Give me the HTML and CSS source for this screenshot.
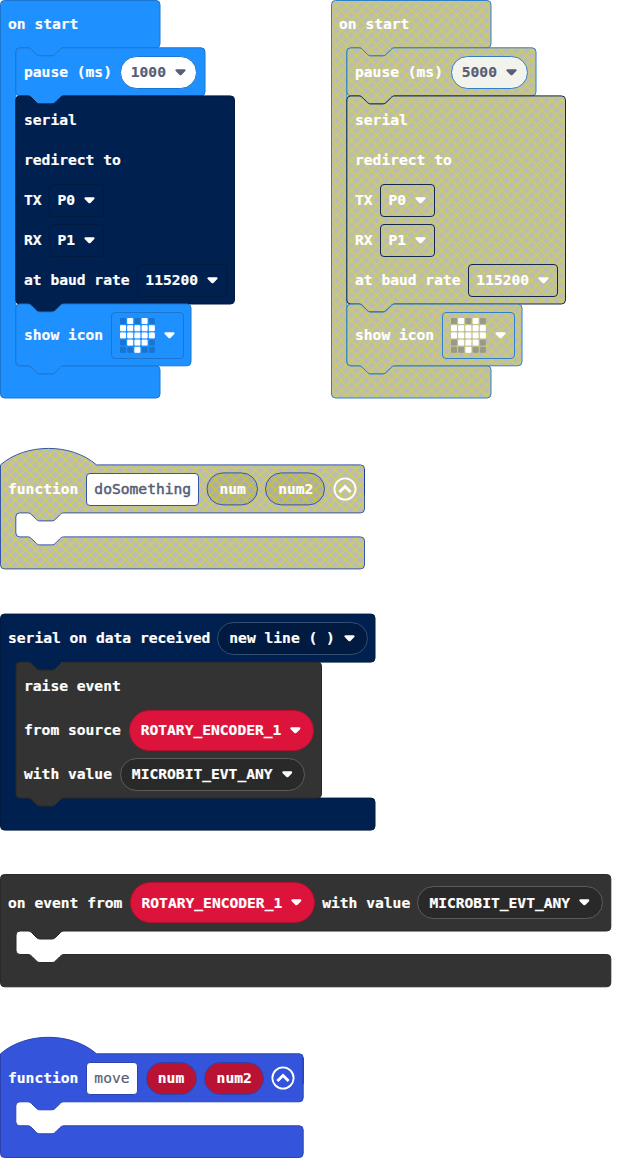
FILE: index.html
```html
<!DOCTYPE html>
<html lang="en">
<head>
<meta charset="utf-8">
<title>Blocks</title>
<link rel="stylesheet" href="styles.css">
</head>
<body>
<svg class="defs" width="0" height="0" aria-hidden="true">
  <defs>
    <pattern id="hatch" width="10" height="10" patternUnits="userSpaceOnUse">
      <rect width="10" height="10" fill="#aaa"/>
      <path d="M-1 -1L11 11M11 -1L-1 11" stroke="#cc0" stroke-width="1.15"/>
    </pattern>
    <symbol id="caret" viewBox="0 0 11 7"><path d="M1.5 .3H9.5C10.6 .3 11 1.4 10.3 2.1L6.7 5.8Q5.5 6.9 4.3 5.8L.7 2.1C0 1.4 .4 .3 1.5 .3Z"/></symbol>
    <symbol id="collapse" viewBox="0 0 24 24"><circle cx="12" cy="12" r="10.6" fill="none" stroke="#fff" stroke-width="1.8"/><path d="M6.4 15L12 9.4L17.6 15" fill="none" stroke="#fff" stroke-width="2.8"/></symbol>
    <symbol id="heart" viewBox="0 0 35 35">
      <path class="led led-off" d="M.5 .5h5v5h-5zM14.9 .5h5v5h-5zM29.3 .5h5v5h-5zM.5 22.1h5v5h-5zM29.3 22.1h5v5h-5zM.5 29.3h5v5h-5zM7.7 29.3h5v5h-5zM22.1 29.3h5v5h-5zM29.3 29.3h5v5h-5z"/>
      <path class="led led-on" d="M7.7 .5h5v5h-5zM22.1 .5h5v5h-5zM.5 7.7h5v5h-5zM7.7 7.7h5v5h-5zM14.9 7.7h5v5h-5zM22.1 7.7h5v5h-5zM29.3 7.7h5v5h-5zM.5 14.9h5v5h-5zM7.7 14.9h5v5h-5zM14.9 14.9h5v5h-5zM22.1 14.9h5v5h-5zM29.3 14.9h5v5h-5zM7.7 22.1h5v5h-5zM14.9 22.1h5v5h-5zM22.1 22.1h5v5h-5zM14.9 29.3h5v5h-5z"/>
    </symbol>
    <g id="start-shapes" transform="translate(.5 .5)">
      <path class="basic" d="M0 4a4 4 0 0 1 4-4H155.5a4 4 0 0 1 4 4V43.3a4 4 0 0 1-4 4H63.3c-2 0-3 1-4 2l-4 4c-1 1-2 2-4 2h-12c-2 0-3-1-4-2l-4-4c-1-1-2-2-4-2h-8a4 4 0 0 0-4 4V361.3a4 4 0 0 0 4 4h8c2 0 3 1 4 2l4 4c1 1 2 2 4 2h12c2 0 3-1 4-2l4-4c1-1 2-2 4-2H155.5a4 4 0 0 1 4 4V393.5a4 4 0 0 1-4 4H4a4 4 0 0 1-4-4Z"/>
      <path class="basic" d="M15.3 51.3a4 4 0 0 1 4-4h8c2 0 3 1 4 2l4 4c1 1 2 2 4 2h12c2 0 3-1 4-2l4-4c1-1 2-2 4-2H200.5a4 4 0 0 1 4 4V91.4a4 4 0 0 1-4 4H63.3c-2 0-3 1-4 2l-4 4c-1 1-2 2-4 2h-12c-2 0-3-1-4-2l-4-4c-1-1-2-2-4-2h-8a4 4 0 0 1-4-4Z"/>
      <path class="serial" d="M15.3 99.4a4 4 0 0 1 4-4h8c2 0 3 1 4 2l4 4c1 1 2 2 4 2h12c2 0 3-1 4-2l4-4c1-1 2-2 4-2H230a4 4 0 0 1 4 4V299.5a4 4 0 0 1-4 4H63.3c-2 0-3 1-4 2l-4 4c-1 1-2 2-4 2h-12c-2 0-3-1-4-2l-4-4c-1-1-2-2-4-2h-8a4 4 0 0 1-4-4Z"/>
      <path class="basic" d="M15.3 307.5a4 4 0 0 1 4-4h8c2 0 3 1 4 2l4 4c1 1 2 2 4 2h12c2 0 3-1 4-2l4-4c1-1 2-2 4-2H186.5a4 4 0 0 1 4 4V361.3a4 4 0 0 1-4 4H63.3c-2 0-3 1-4 2l-4 4c-1 1-2 2-4 2h-12c-2 0-3-1-4-2l-4-4c-1-1-2-2-4-2h-8a4 4 0 0 1-4-4Z"/>
    </g>
  </defs>
</svg>

<main class="workspace">
  <div class="pair">
    <section class="script start">
      <svg class="shapes" width="236" height="399"><use href="#start-shapes"/></svg>
      <div class="content">
        <div class="row">on start</div>
        <div class="row inner">pause (ms)<span class="field number">1000<svg class="caret"><use href="#caret"/></svg></span></div>
        <div class="lines">
          <div class="row inner">serial</div>
          <div class="row inner">redirect to</div>
          <div class="row inner">TX<span class="field menu">P0<svg class="caret"><use href="#caret"/></svg></span></div>
          <div class="row inner">RX<span class="field menu">P1<svg class="caret"><use href="#caret"/></svg></span></div>
          <div class="row inner">at baud rate<span class="field menu">115200<svg class="caret"><use href="#caret"/></svg></span></div>
        </div>
        <div class="row inner tall">show icon<span class="field icon"><svg class="heart"><use href="#heart"/></svg><svg class="caret"><use href="#caret"/></svg></span></div>
      </div>
    </section>

    <section class="script start disabled">
      <svg class="shapes" width="236" height="399"><use href="#start-shapes"/></svg>
      <div class="content">
        <div class="row">on start</div>
        <div class="row inner">pause (ms)<span class="field number">5000<svg class="caret"><use href="#caret"/></svg></span></div>
        <div class="lines">
          <div class="row inner">serial</div>
          <div class="row inner">redirect to</div>
          <div class="row inner">TX<span class="field menu">P0<svg class="caret"><use href="#caret"/></svg></span></div>
          <div class="row inner">RX<span class="field menu">P1<svg class="caret"><use href="#caret"/></svg></span></div>
          <div class="row inner">at baud rate<span class="field menu">115200<svg class="caret"><use href="#caret"/></svg></span></div>
        </div>
        <div class="row inner tall">show icon<span class="field icon"><svg class="heart"><use href="#heart"/></svg><svg class="caret"><use href="#caret"/></svg></span></div>
      </div>
    </section>
  </div>

  <section class="script function disabled do-something">
    <svg class="shapes" width="366" height="122">
      <g transform="translate(.5 16.9)">
        <path class="func" d="M0 0c25-22 71-22 96 0H360a4 4 0 0 1 4 4V44a4 4 0 0 1-4 4H63.3c-2 0-3 1-4 2l-4 4c-1 1-2 2-4 2h-12c-2 0-3-1-4-2l-4-4c-1-1-2-2-4-2h-8a4 4 0 0 0-4 4V68a4 4 0 0 0 4 4h8c2 0 3 1 4 2l4 4c1 1 2 2 4 2h12c2 0 3-1 4-2l4-4c1-1 2-2 4-2H360a4 4 0 0 1 4 4V100a4 4 0 0 1-4 4H4a4 4 0 0 1-4-4Z"/>
        <path class="edge" d="M364 4V30"/>
        <rect class="func" x="206.5" y="8" width="50.5" height="32" rx="16"/>
        <rect class="func" x="265" y="8" width="59" height="32" rx="16"/>
      </g>
    </svg>
    <div class="content">
      <div class="row">function<span class="field name">doSomething</span><span class="field param">num</span><span class="field param">num2</span><svg class="toggle"><use href="#collapse"/></svg></div>
    </div>
  </section>

  <section class="script received">
    <svg class="shapes" width="376" height="218">
      <g transform="translate(.5 .1)">
        <path class="serial" d="M0 4a4 4 0 0 1 4-4H370.5a4 4 0 0 1 4 4V44a4 4 0 0 1-4 4H60V184H370.5a4 4 0 0 1 4 4V212a4 4 0 0 1-4 4H4a4 4 0 0 1-4-4Z"/>
        <path class="control" d="M15.5 52a4 4 0 0 1 4-4h8c2 0 3 1 4 2l4 4c1 1 2 2 4 2h12c2 0 3-1 4-2l4-4c1-1 2-2 4-2H317a4 4 0 0 1 4 4V180a4 4 0 0 1-4 4H63.5c-2 0-3 1-4 2l-4 4c-1 1-2 2-4 2h-12c-2 0-3-1-4-2l-4-4c-1-1-2-2-4-2h-8a4 4 0 0 1-4-4Z"/>
      </g>
    </svg>
    <div class="content">
      <div class="row">serial on data received<span class="field round newline">new line ( )<svg class="caret"><use href="#caret"/></svg></span></div>
      <div class="row inner">raise event</div>
      <div class="row inner source">from source<span class="field round enum">ROTARY_ENCODER_1<svg class="caret"><use href="#caret"/></svg></span></div>
      <div class="row inner">with value<span class="field round value">MICROBIT_EVT_ANY<svg class="caret"><use href="#caret"/></svg></span></div>
    </div>
  </section>

  <section class="script event">
    <svg class="shapes" width="612" height="114">
      <g transform="translate(.5 .5)">
        <path class="control" d="M0 4a4 4 0 0 1 4-4H606.3a4 4 0 0 1 4 4V52.5a4 4 0 0 1-4 4H63.5c-2 0-3 1-4 2l-4 4c-1 1-2 2-4 2h-12c-2 0-3-1-4-2l-4-4c-1-1-2-2-4-2h-8a4 4 0 0 0-4 4V76a4 4 0 0 0 4 4h8c2 0 3 1 4 2l4 4c1 1 2 2 4 2h12c2 0 3-1 4-2l4-4c1-1 2-2 4-2H606.3a4 4 0 0 1 4 4V108.3a4 4 0 0 1-4 4H4a4 4 0 0 1-4-4Z"/>
      </g>
    </svg>
    <div class="content">
      <div class="row event-row">on event from<span class="field round enum">ROTARY_ENCODER_1<svg class="caret"><use href="#caret"/></svg></span><span class="label">with value</span><span class="field round value">MICROBIT_EVT_ANY<svg class="caret"><use href="#caret"/></svg></span></div>
    </div>
  </section>

  <section class="script function move">
    <svg class="shapes" width="305" height="121">
      <g transform="translate(.5 16.8)">
        <path class="func" d="M0 0c25-22 71-22 96 0H298.7a4 4 0 0 1 4 4V44a4 4 0 0 1-4 4H63.3c-2 0-3 1-4 2l-4 4c-1 1-2 2-4 2h-12c-2 0-3-1-4-2l-4-4c-1-1-2-2-4-2h-8a4 4 0 0 0-4 4V68a4 4 0 0 0 4 4h8c2 0 3 1 4 2l4 4c1 1 2 2 4 2h12c2 0 3-1 4-2l4-4c1-1 2-2 4-2H298.7a4 4 0 0 1 4 4V99.7a4 4 0 0 1-4 4H4a4 4 0 0 1-4-4Z"/>
        <path class="edge" d="M302.7 4V30"/>
      </g>
    </svg>
    <div class="content">
      <div class="row">function<span class="field name">move</span><span class="field param">num</span><span class="field param">num2</span><svg class="toggle"><use href="#collapse"/></svg></div>
    </div>
  </section>
</main>
</body>
</html>
```

FILE: styles.css
```css
* { box-sizing: border-box; }
body {
  margin: 0;
  background: #fff;
  color: #fff;
  font: bold 14.62px/20px "DejaVu Sans Mono", monospace;
  -webkit-text-stroke: .2px currentColor;
  overflow: hidden;
}
.defs { display: block; }
.workspace { display: flex; flex-direction: column; align-items: flex-start; width: 617px; height: 1158px; }
.pair { display: flex; gap: 95px; height: 399px; }
.script {
  display: grid;
  flex: none;
  --basic: #1e90ff;
  --basic-line: #1b76cf;
  --serial: #002050;
  --serial-line: #001a40;
  --func: #3455db;
  --func-line: #2a44af;
  --led-off: #1a75cf;
  --fill-alpha: 1;
}
.disabled {
  --basic: url(#hatch);
  --basic-line: #3080c8;
  --serial: url(#hatch);
  --serial-line: #12284c;
  --func: url(#hatch);
  --func-line: #3455a8;
  --led-off: #999985;
  --fill-alpha: .8;
}
.shapes, .content { grid-area: 1 / 1; }
.shapes { display: block; overflow: visible; }
.start { width: 236px; }
.do-something { margin-top: 49px; height: 122px; }
.received { margin-top: 44px; height: 218px; }
.event { margin-top: 42px; height: 114px; }
.move { margin-top: 49px; height: 120px; }

/* block bodies */
.basic { fill: var(--basic); stroke: var(--basic-line); fill-opacity: var(--fill-alpha); }
.serial { fill: var(--serial); stroke: var(--serial-line); fill-opacity: var(--fill-alpha); }
.control { fill: #333; stroke: #292929; }
.func { fill: var(--func); stroke: var(--func-line); fill-opacity: var(--fill-alpha); }
.edge { stroke: #1a36a0; }

/* text rows */
.row { display: flex; align-items: center; gap: 7.8px; height: 48px; padding-left: 8px; white-space: pre; }
.inner { padding-left: 24px; }
.lines { padding: 4px 0; }
.lines .row { height: 40px; }
.tall { height: 62px; }
.source { height: 40px; }
.function .content { padding-top: 17px; }
.event-row { height: 57px; gap: 7.2px; }
.received .row { gap: 7px; }
.received .inner { gap: 7.9px; }

/* fields */
.field { display: flex; align-items: center; height: 33px; border: 1px solid; flex: none; }
.caret { width: 11px; height: 7px; fill: currentColor; margin-left: 9px; }
.number { width: 77px; padding-left: 10px; border-radius: 17px; border-color: var(--basic-line); background: #fff; color: #575e75; }
.disabled .number { background: #f3f3ed; }
.menu { padding: 0 7.7px 0 7px; border-radius: 4px; border-color: var(--serial-line); }
.icon { width: 73px; height: 47px; padding-left: 8px; border-radius: 4px; border-color: var(--basic-line); }
.heart { width: 35px; height: 35px; }
.led { stroke-width: 1; stroke-linejoin: round; }
.led-on { fill: #fff; stroke: #fff; }
.led-off { fill: var(--led-off); stroke: var(--led-off); }
.name { padding: 0 7.2px; border-radius: 4px; border-color: var(--func-line); background: #fff; color: #575e75; font-weight: normal; }
.disabled .name { -webkit-text-stroke-width: .5px; }
.param { padding: 0 11.3px; border-radius: 17px; border-color: #2a44af; background: #ba1232; }
.disabled .param { background: none; border-color: transparent; }
.toggle { width: 24px; height: 24px; margin-left: -.9px; }
.round { padding: 0 12px 0 11px; border-radius: 21px; }
.newline { background: #001a40; border-color: #334d73; }
.value { width: 185.5px; background: #292929; border-color: #5c5c5c; }
.enum { width: 185.5px; height: 41px; background: #dc143c; border-color: #b01030; }
```
